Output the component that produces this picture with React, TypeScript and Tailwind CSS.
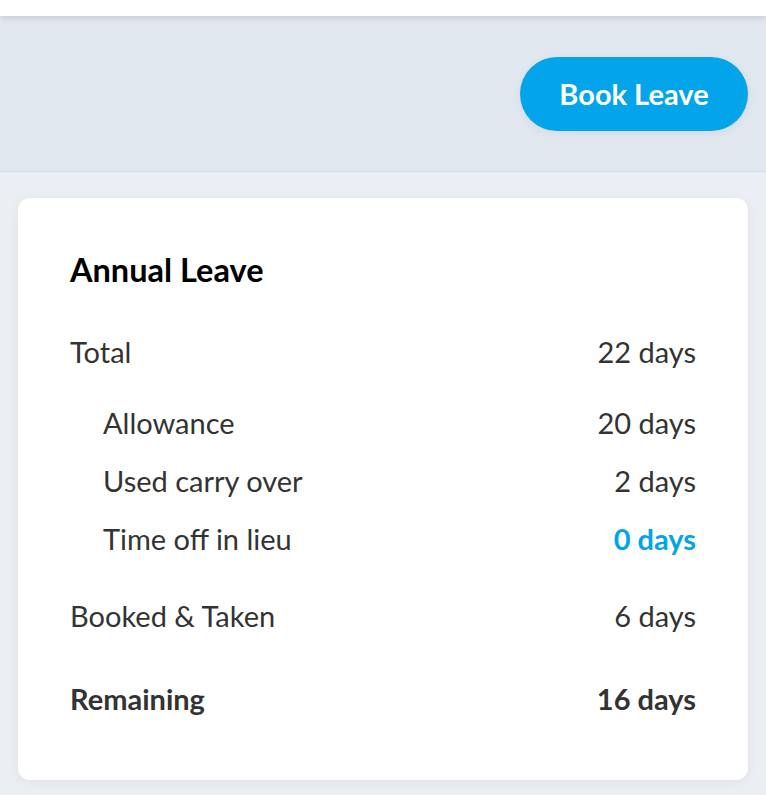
export default function App() {
  const sub = [
    { label: "Allowance", value: "20 days" },
    { label: "Used carry over", value: "2 days" },
  ];
  return (
    <div className="min-h-[795px] bg-[#ebeff4]" style={{ fontFamily: "Lato, 'Noto Sans', sans-serif" }}>
      <div className="h-4 bg-white shadow-[0_2px_6px_rgba(0,0,0,0.12)] relative z-10" />
      <div className="h-[156px] bg-[#e0e7ef] border-b border-[#d5dce6] flex items-center justify-end pr-[18px] pt-[1px]">
        <button className="h-[74px] w-[228px] rounded-full bg-[#03a4e9] text-white text-[29px] font-bold shadow-[0_2px_10px_rgba(0,0,0,0.06)]">
          Book Leave
        </button>
      </div>
      <div className="px-[18px] pt-[26px]">
        <div className="bg-white rounded-xl shadow-[0_2px_12px_rgba(0,0,0,0.06)] px-[52px] pt-[50px] pb-[59px] text-[#333] text-[29px]">
          <h2 className="text-[32.5px] font-bold text-black leading-[44px]">Annual Leave</h2>
          <div className="flex justify-between items-center h-[44px] mt-[38px]">
            <span>Total</span>
            <span>22 days</span>
          </div>
          <div className="mt-[20px]">
            {sub.map((r) => (
              <div key={r.label} className="flex justify-between items-center h-[58px] pl-[33px]">
                <span>{r.label}</span>
                <span>{r.value}</span>
              </div>
            ))}
            <div className="flex justify-between items-center h-[58px] pl-[33px]">
              <span>Time off in lieu</span>
              <span className="font-bold text-[#03a4e9]">0 days</span>
            </div>
          </div>
          <div className="flex justify-between items-center h-[44px] mt-[26px]">
            <span>Booked &amp; Taken</span>
            <span>6 days</span>
          </div>
          <div className="flex justify-between items-center h-[44px] mt-[39px] font-bold">
            <span>Remaining</span>
            <span>16 days</span>
          </div>
        </div>
      </div>
    </div>
  );
}
